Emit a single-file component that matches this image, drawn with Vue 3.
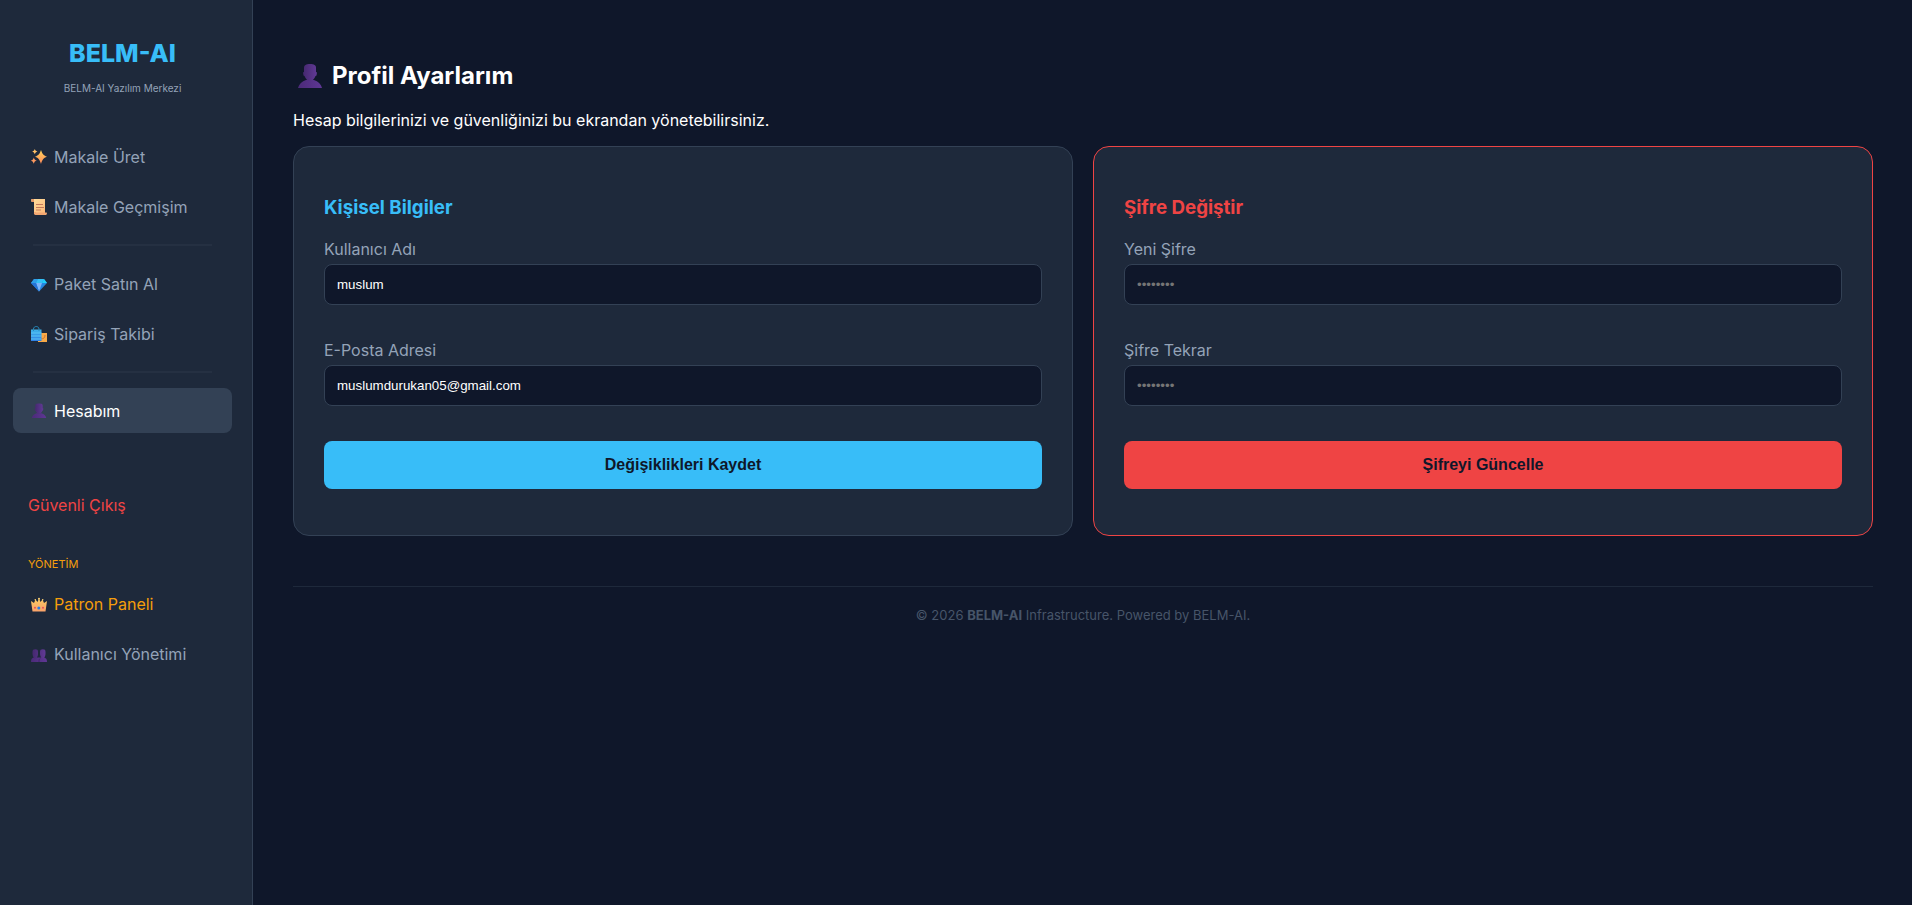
<script setup>
import { ref } from 'vue'

const username = ref('muslum')
const email = ref('muslumdurukan05@gmail.com')
const password = ref('')
const passwordRepeat = ref('')
</script>

<template>
  <div class="layout">
    <svg class="defs" aria-hidden="true">
      <defs>
        <linearGradient id="gold" x1="0" y1="0" x2="0" y2="1">
          <stop offset="0" stop-color="#ffd45a" />
          <stop offset="1" stop-color="#ff8a5c" />
        </linearGradient>
        <linearGradient id="paper" x1="0" y1="0" x2="1" y2="1">
          <stop offset="0" stop-color="#ffe0a0" />
          <stop offset="1" stop-color="#fdb878" />
        </linearGradient>
        <linearGradient id="bag" x1="0" y1="0" x2="0" y2="1">
          <stop offset="0" stop-color="#3fb4ea" />
          <stop offset="1" stop-color="#2f7fe4" />
        </linearGradient>
        <linearGradient id="crown" x1="0" y1="0" x2="0" y2="1">
          <stop offset="0" stop-color="#fccb62" />
          <stop offset="1" stop-color="#f9a26a" />
        </linearGradient>
        <linearGradient id="head" x1="0" y1="0" x2="1" y2="0">
          <stop offset="0" stop-color="#45286f" />
          <stop offset="1" stop-color="#613a96" />
        </linearGradient>
        <linearGradient id="bust" x1="0" y1="0" x2="1" y2="0">
          <stop offset="0" stop-color="#4b2a78" />
          <stop offset="1" stop-color="#5f3795" />
        </linearGradient>
        <symbol id="person" viewBox="0 0 24 24">
          <path d="M0 24c1-4 4-6.500 8-8h8c4 1.500 7 4 8 8z" fill="url(#bust)" />
          <path d="M6 4c0-3 2-4 6-4s6 1 6 4v4l1 .5-.5 3-1 .5c-1 3-3.500 5-5.500 5s-4.500-2-5.500-5l-1-.5-.5-3 1-.5z" fill="url(#head)" />
        </symbol>
      </defs>
    </svg>

    <aside class="sidebar">
      <header class="brand">
        <div class="brand-name">BELM-AI</div>
        <div class="brand-sub">BELM-AI Yazılım Merkezi</div>
      </header>

      <nav class="menu">
        <a class="item" href="#">
          <svg class="icon" viewBox="0 0 16 16" aria-hidden="true">
            <path d="M10 1c1.300 4 2.300 5.200 6 6.700-3.700 1.400-4.700 2.900-6 7.300-1.300-4.400-2.300-5.900-6-7.300C7.700 6.200 8.700 5 10 1z" fill="url(#gold)" />
            <path d="M3.800 0c.6 1.500 1 2 2.600 2.500-1.600.5-2 1-2.600 2.700C3.200 3.500 2.800 3 1.200 2.500 2.800 2 3.200 1.500 3.800 0z" fill="#ffc066" />
            <path d="M2.800 8.500c.6 2 1.100 2.600 3 3.100-1.900.6-2.400 1.200-3 3.200-.6-2-1.100-2.600-3-3.200 1.900-.5 2.400-1.100 3-3.100z" fill="#ff9a60" />
          </svg>
          <span>Makale Üret</span>
        </a>
        <a class="item" href="#">
          <svg class="icon" viewBox="0 0 16 16" aria-hidden="true">
            <path d="M1 0h13v14H3V3H1.500C-.3 3 0 0 1 0z" fill="url(#paper)" />
            <path d="M1 0h2v3H1.500C-.3 3 0 0 1 0z" fill="#e79a67" />
            <path d="M5 13.500h10.500c.8 0 .5 2.500-.5 2.500H4.500C2.500 16 3 13.500 3 13h2z" fill="#f3a772" />
            <path d="M5 5.500h7M5 8.500h8M5 11h5" stroke="#c57a5c" fill="none" />
          </svg>
          <span>Makale Geçmişim</span>
        </a>
        <hr class="rule">
        <a class="item" href="#">
          <svg class="icon" viewBox="0 0 16 16" aria-hidden="true">
            <path d="M3 3h10l3 4-8 8.500L0 7z" fill="#2586e0" />
            <path d="M3 3h4L5 7H0z" fill="#2f9ee8" />
            <path d="M7 3h6l-2 4H5z" fill="#35c0f4" />
            <path d="M13 3l3 4h-5z" fill="#20d2fa" />
            <path d="M5 7h6l-3 8.500z" fill="#7cb4f8" />
            <path d="M0 7h5l3 8.500z" fill="#2673d6" />
          </svg>
          <span>Paket Satın Al</span>
        </a>
        <a class="item" href="#">
          <svg class="icon" viewBox="0 0 16 16" aria-hidden="true">
            <path d="M7 7h9v9H7z" fill="#f8a946" />
            <path d="M10 12.500c2.500 1 4-1 4-3.500" stroke="#c8743c" fill="none" />
            <path d="M0 3.500h10.500V15H0z" fill="url(#bag)" />
            <path d="M0 7h10.500M0 10h10.500M0 13h10.500" stroke="#5bc8f5" fill="none" />
            <path d="M2.500 5V3c0-3.300 5.500-3.300 5.500 0v2" stroke="#2788b8" fill="none" />
          </svg>
          <span>Sipariş Takibi</span>
        </a>
        <hr class="rule">
        <a class="item active" href="#" aria-current="page">
          <svg class="icon" viewBox="-1 0 26 25" aria-hidden="true"><use href="#person" width="24" height="24" /></svg>
          <span>Hesabım</span>
        </a>
      </nav>

      <a class="item logout" href="#">Güvenli Çıkış</a>

      <div class="group-title">YÖNETİM</div>
      <nav class="menu">
        <a class="item admin" href="#">
          <svg class="icon" viewBox="0 0 16 16" aria-hidden="true">
            <path d="M0 5l3 2 1.500-3.500L6.500 6 8 2.500 9.500 6l2-2.500L13 7l3-2-1.500 10.500h-13z" fill="url(#crown)" />
            <circle cx="8" cy="2.800" r="1" fill="#fcd074" />
            <circle cx="4.300" cy="3.800" r=".8" fill="#fcd074" />
            <circle cx="11.700" cy="3.800" r=".8" fill="#fcd074" />
            <circle cx="7.800" cy="12" r="1.500" fill="#287ee6" />
            <circle cx="4" cy="11.700" r="1" fill="#e94f5b" />
            <circle cx="12" cy="11.700" r="1" fill="#e94f5b" />
          </svg>
          <span>Patron Paneli</span>
        </a>
        <a class="item" href="#">
          <svg class="icon" viewBox="0 0 16 16" aria-hidden="true">
            <path d="M0 16c0-3 1-4 3-4.500h9.500c2.500.5 3.500 1.500 3.500 4.500z" fill="url(#bust)" />
            <path d="M1.500 6c0-2 .8-2.700 2.800-2.700S7 4 7 6v2c0 2-1 3.300-1.300 4.500H3C2.700 11 1.500 10 1.500 8zM9 6c0-2 .8-2.700 2.800-2.700s2.700.7 2.700 2.700v2c0 2-1.100 3-1.400 4.500h-2.600C10.200 11 9 10 9 8z" fill="url(#head)" />
            <path d="M8 16c0-2 .3-3 1-3.500" stroke="#42266a" fill="none" />
          </svg>
          <span>Kullanıcı Yönetimi</span>
        </a>
      </nav>
    </aside>

    <main class="content">
      <h2 class="title">
        <svg class="title-icon" viewBox="0 0 24 24" aria-hidden="true"><use href="#person" width="24" height="24" /></svg>
        <span>Profil Ayarlarım</span>
      </h2>
      <p class="lead">Hesap bilgilerinizi ve güvenliğinizi bu ekrandan yönetebilirsiniz.</p>

      <div class="cards">
        <form class="card" @submit.prevent>
          <h3>Kişisel Bilgiler</h3>
          <div class="field">
            <label for="username">Kullanıcı Adı</label>
            <input id="username" v-model="username" type="text">
          </div>
          <div class="field">
            <label for="email">E-Posta Adresi</label>
            <input id="email" v-model="email" type="email">
          </div>
          <button type="submit">Değişiklikleri Kaydet</button>
        </form>

        <form class="card danger" @submit.prevent>
          <h3>Şifre Değiştir</h3>
          <div class="field">
            <label for="password">Yeni Şifre</label>
            <input id="password" v-model="password" type="password" placeholder="••••••••" autocomplete="new-password">
          </div>
          <div class="field">
            <label for="password-repeat">Şifre Tekrar</label>
            <input id="password-repeat" v-model="passwordRepeat" type="password" placeholder="••••••••" autocomplete="new-password">
          </div>
          <button type="submit">Şifreyi Güncelle</button>
        </form>
      </div>

      <footer class="footer">© 2026 <b>BELM-AI</b> Infrastructure. Powered by BELM-AI.</footer>
    </main>
  </div>
</template>

<style>
body {
  margin: 0;
  background: #0f172a;
}
</style>

<style scoped>
.layout {
  display: flex;
  min-height: 100vh;
  background: #0f172a;
  color: #fff;
  font-family: Inter, "Liberation Sans", sans-serif;
  font-size: 16px;
  line-height: 20px;
}
.defs {
  position: absolute;
  width: 0;
  height: 0;
}
.sidebar {
  box-sizing: border-box;
  flex: 0 0 253px;
  padding: 37px 20px 20px 13px;
  background: #1e293b;
  border-right: 1px solid #334155;
}
.brand {
  margin-bottom: 38px;
  text-align: center;
}
.brand-name {
  margin-bottom: 12px;
  color: #38bdf8;
  font-size: 25px;
  font-weight: 800;
  line-height: 32px;
}
.brand-sub {
  color: #94a3b8;
  font-size: 10px;
  line-height: 15px;
}
.menu {
  display: flex;
  flex-direction: column;
  gap: 5px;
}
.item {
  box-sizing: border-box;
  display: flex;
  align-items: center;
  gap: 7px;
  min-height: 45px;
  padding: 0 15px;
  border-radius: 8px;
  color: #94a3b8;
  text-decoration: none;
}
.item.active {
  background: #334155;
  color: #fff;
}
.item.admin {
  color: #f59e0b;
}
.item.logout {
  margin-top: 49px;
  color: #ef4444;
}
.icon {
  width: 16px;
  height: 16px;
  margin-left: 3px;
}
.rule {
  align-self: stretch;
  height: 2px;
  margin: 10px 20px;
  border: 0;
  background: #253042;
}
.group-title {
  margin: 30px 0 9px;
  padding: 0 15px;
  color: #f59e0b;
  font-size: 11px;
  line-height: 15px;
}
.content {
  flex: 1;
  min-width: 0;
  padding: 60px 39px 40px 40px;
}
.title {
  display: flex;
  align-items: center;
  gap: 10px;
  margin: 0 0 18px;
  padding-left: 5px;
  font-size: 24px;
  font-weight: 700;
  line-height: 32px;
}
.title-icon {
  width: 24px;
  height: 24px;
}
.lead {
  margin: 0 0 16px;
}
.cards {
  display: grid;
  grid-template-columns: 1fr 1fr;
  gap: 20px;
}
.card {
  padding: 49px 30px 46px;
  background: #1e293b;
  border: 1px solid #334155;
  border-radius: 16px;
}
.card.danger {
  border-color: #ef4444;
}
.card h3 {
  margin: 0 0 20px;
  color: #38bdf8;
  line-height: 23px;
}
.card.danger h3 {
  color: #ef4444;
}
.field {
  display: flex;
  flex-direction: column;
  gap: 5px;
  margin-bottom: 35px;
}
.field label {
  color: #94a3b8;
}
.field input {
  box-sizing: border-box;
  width: 100%;
  height: 41px;
  padding: 0 12px;
  background: #0f172a;
  border: 1px solid #334155;
  border-radius: 8px;
  color: #fff;
  font-family: "Liberation Sans", Arial, sans-serif;
}
.field input::placeholder {
  color: #757575;
}
.card button {
  width: 100%;
  height: 48px;
  border: 0;
  border-radius: 8px;
  background: #38bdf8;
  color: #0f172a;
  font-family: "Liberation Sans", Arial, sans-serif;
  font-size: 16px;
  font-weight: 700;
  cursor: pointer;
}
.card.danger button {
  background: #ef4444;
}
.footer {
  margin-top: 50px;
  padding-top: 20px;
  border-top: 1px solid #1e293b;
  color: #475569;
  font-size: 13px;
  line-height: 17px;
  text-align: center;
}
</style>
